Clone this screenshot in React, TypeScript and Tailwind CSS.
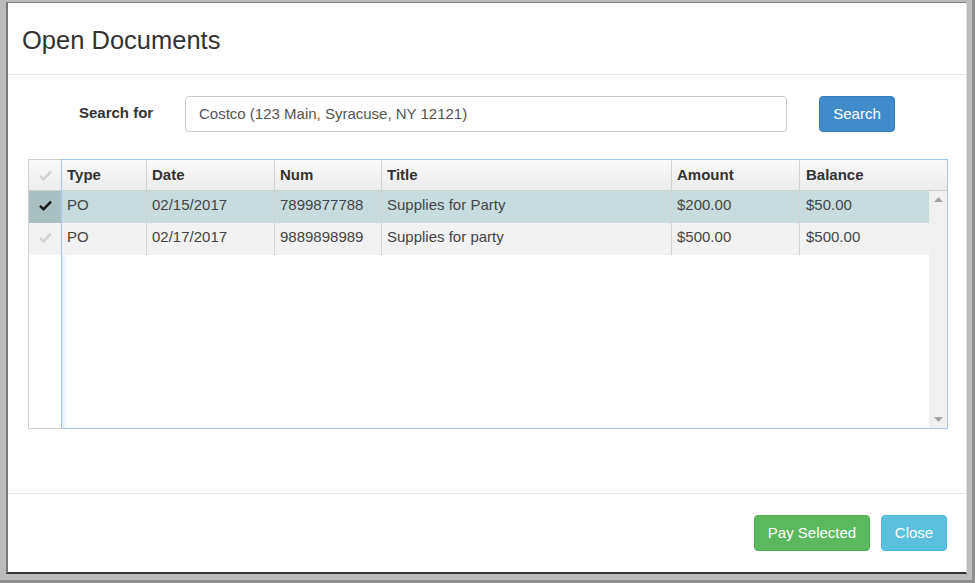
import React from "react";

type Doc = {
  type: string;
  date: string;
  num: string;
  title: string;
  amount: string;
  balance: string;
  selected: boolean;
};

const docs: Doc[] = [
  { type: "PO", date: "02/15/2017", num: "7899877788", title: "Supplies for Party", amount: "$200.00", balance: "$50.00", selected: true },
  { type: "PO", date: "02/17/2017", num: "9889898989", title: "Supplies for party", amount: "$500.00", balance: "$500.00", selected: false },
];

function Check({ color }: { color: string }) {
  return (
    <svg width="13" height="11" viewBox="0 0 13 11" aria-hidden="true">
      <path d="M1 5.8 L4.6 9.2 L12 1.6" fill="none" stroke={color} strokeWidth="2.4" strokeLinejoin="miter" />
    </svg>
  );
}

const cols = [
  { key: "type", label: "Type", w: "w-[84px]" },
  { key: "date", label: "Date", w: "w-[128px]" },
  { key: "num", label: "Num", w: "w-[107px]" },
  { key: "title", label: "Title", w: "w-[290px]" },
  { key: "amount", label: "Amount", w: "w-[128px]" },
] as const;

export default function App() {
  return (
    <div
      className="w-[975px] h-[583px] bg-[#bcbcbc] border-r-[3px] border-b-[3px] border-[#8e8e8e] pt-[2px] pl-[6px] pr-[5px] pb-[6px] text-[#333]"
      style={{ fontFamily: '"Liberation Sans", Arial, sans-serif' }}
    >
      <div className="h-full flex flex-col bg-white border-t border-l-2 border-t-[#808080] border-l-[#7a7a7a] border-r border-r-[#e2e2e2] border-b-2 border-b-[#333]">
        {/* header */}
        <div className="h-[72px] shrink-0 flex items-center pl-[14px] pt-[5px] border-b border-[#e5e5e5]">
          <h4 className="text-[25.5px] leading-none text-[#333]">Open Documents</h4>
        </div>

        {/* body */}
        <div className="h-[418px] shrink-0 pt-[21px] pl-[20px] pr-[18px]">
          <div className="flex items-start">
            <label className="w-[157px] pl-[51px] pt-[8px] text-[15px] font-bold leading-[18px] text-[#333]">
              Search for
            </label>
            <div className="w-[602px] h-[36px] border border-[#ccc] rounded-[4px] flex items-center pl-[13px] pt-[1px] text-[15px] text-[#555]">
              Costco (123 Main, Syracuse, NY 12121)
            </div>
            <button className="ml-[32px] w-[76px] h-[36px] rounded-[4px] bg-[#428bca] border border-[#357ebd] text-white text-[15px]">
              Search
            </button>
          </div>

          {/* grid */}
          <div className="mt-[27px] h-[270px] flex">
            {/* check column */}
            <div className="w-[33px] shrink-0 flex flex-col border-l border-t border-b border-[#cfcfcf]">
              <div className="h-[31px] flex items-center justify-center bg-gradient-to-b from-[#fafafa] to-[#ececec] border-b border-[#d0d0d0]">
                <Check color="#d2d2d2" />
              </div>
              {docs.map((d, i) => (
                <div
                  key={i}
                  className={
                    "h-[32px] flex items-center justify-center pb-[3px] " +
                    (d.selected ? "bg-[#a9bfc2]" : "bg-[#f2f2f2]")
                  }
                >
                  <Check color={d.selected ? "#1a1a1a" : "#d2d2d2"} />
                </div>
              ))}
            </div>

            {/* main grid */}
            <div className="flex-1 flex flex-col border border-[#a5c7e9] shadow-[inset_2px_2px_4px_rgba(150,190,230,0.35)]">
              <div className="h-[31px] shrink-0 flex bg-gradient-to-b from-[#fafafa] to-[#ececec] border-b border-[#d0d0d0] text-[15px] font-bold">
                {cols.map((c, i) => (
                  <div
                    key={c.key}
                    className={c.w + " shrink-0 flex items-center pl-[5px] " + (i > 0 ? "border-l border-[#d4d4d4]" : "")}
                  >
                    {c.label}
                  </div>
                ))}
                <div className="flex-1 flex items-center pl-[6px] border-l border-[#d4d4d4]">Balance</div>
              </div>
              <div className="flex-1 flex">
                <div className="flex-1 flex flex-col">
                  {docs.map((d, r) => (
                    <div
                      key={r}
                      className={"h-[32px] flex text-[15px] text-[#444] " + (d.selected ? "bg-[#c8dcdf]" : "bg-[#f2f2f2]")}
                    >
                      {cols.map((c, i) => (
                        <div
                          key={c.key}
                          className={c.w + " shrink-0 flex items-center pl-[5px] pb-[4px] " + (i > 0 ? "border-l border-[#d4d4d4]" : "")}
                        >
                          {d[c.key]}
                        </div>
                      ))}
                      <div className="flex-1 flex items-center pl-[6px] pb-[4px] border-l border-[#d4d4d4]">{d.balance}</div>
                    </div>
                  ))}
                </div>
                {/* scrollbar */}
                <div className="w-[18px] shrink-0 bg-[#f0f0f0] flex flex-col items-center justify-between py-[6px]">
                  <svg width="9" height="5" viewBox="0 0 9 5" aria-hidden="true">
                    <path d="M0 5 L4.5 0 L9 5 Z" fill="#a3a3a3" />
                  </svg>
                  <svg width="9" height="5" viewBox="0 0 9 5" aria-hidden="true">
                    <path d="M0 0 L4.5 5 L9 0 Z" fill="#a3a3a3" />
                  </svg>
                </div>
              </div>
            </div>
          </div>
        </div>

        {/* footer */}
        <div className="flex-1 border-t border-[#e5e5e5] flex justify-end items-start pt-[21px] pr-[19px] gap-[11px]">
          <button className="w-[116px] h-[36px] rounded-[4px] bg-[#5cb85c] border border-[#4cae4c] text-white text-[15px]">
            Pay Selected
          </button>
          <button className="w-[66px] h-[36px] rounded-[4px] bg-[#5bc0de] border border-[#46b8da] text-white text-[15px]">
            Close
          </button>
        </div>
      </div>
    </div>
  );
}
